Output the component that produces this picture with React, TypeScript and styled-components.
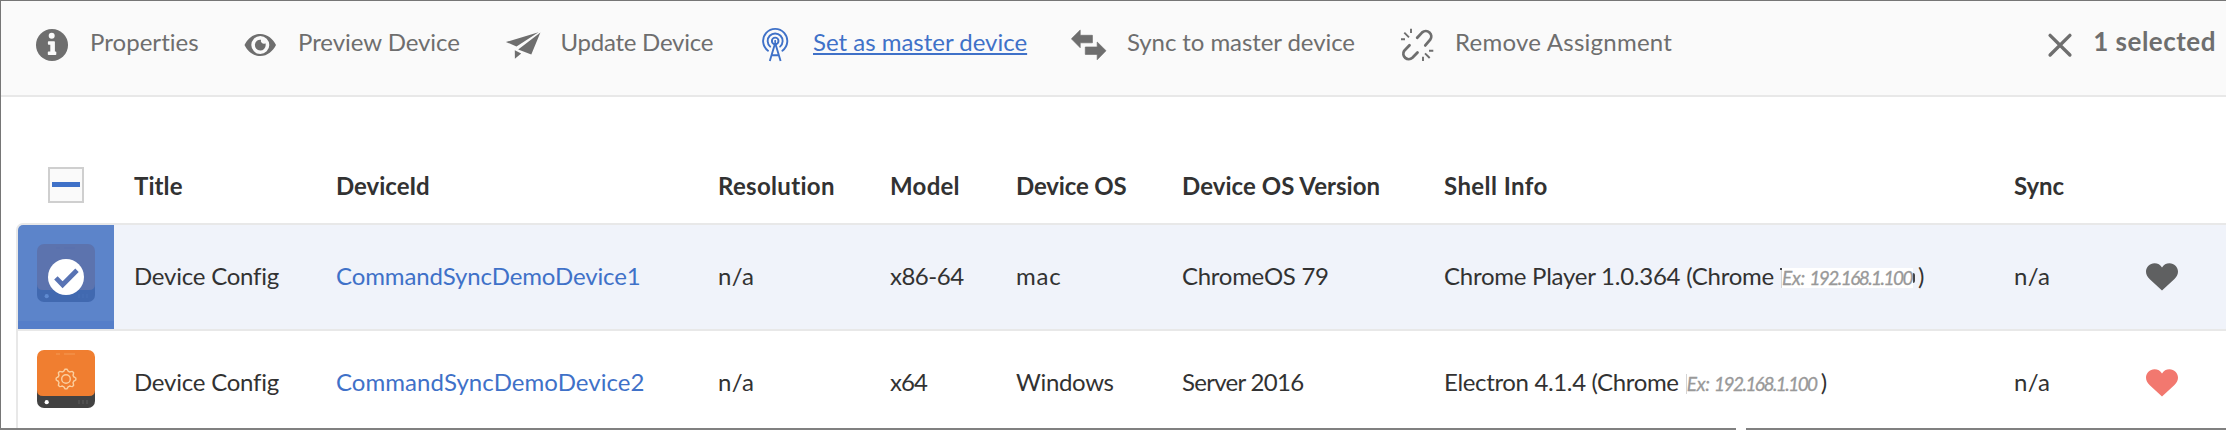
import React from "react";
import styled, { createGlobalStyle } from "styled-components";

const GlobalStyle = createGlobalStyle`
  * { box-sizing: border-box; }
  body { margin: 0; background: #fff; overflow: hidden; font-family: Lato, "Open Sans", sans-serif; font-size: 24px; }
`;

const Page = styled.div`
  width: 2226px;
  height: 433px;
  display: flex;
  flex-direction: column;
`;
const Frame = styled.main`
  height: 428px;
  border-top: 1px solid #767676;
  border-left: 1px solid #767676;
  overflow: hidden;
`;
const BottomEdge = styled.div`
  display: flex;
  gap: 10px;
  height: 2px;
`;
const Edge = styled.div<{ $width?: number }>`
  flex: ${(p) => (p.$width ? `0 0 ${p.$width}px` : "1")};
  background: #808080;
`;

const Toolbar = styled.nav`
  display: grid;
  grid-template-columns: 208px 262.5px 252.5px 314px 328px 400px 1fr;
  align-items: center;
  height: 96px;
  padding: 0 10px 6px 33px;
  background: #fafafa;
  border-bottom: 2px solid #e8e8e8;
`;
const Action = styled.a<{ $active?: boolean }>`
  display: flex;
  align-items: center;
  gap: 20px;
  height: 36px;
  color: ${(p) => (p.$active ? "#3f71c8" : "#6e6e6e")};
`;
const ActionLabel = styled.span<{ $tracking?: number; $active?: boolean }>`
  padding-bottom: 7px;
  line-height: 30px;
  white-space: nowrap;
  letter-spacing: ${(p) => p.$tracking ?? 0}px;
  text-decoration: ${(p) => (p.$active ? "underline" : "none")};
  text-decoration-thickness: 2px;
  text-underline-offset: 2px;
  text-decoration-skip-ink: none;
`;
const Selection = styled.div`
  display: flex;
  justify-content: flex-end;
  align-items: center;
  gap: 15px;
  color: #6e6e6e;
`;
const SelectionCount = styled.span`
  padding-bottom: 9px;
  font-size: 26px;
  font-weight: 700;
  line-height: 30px;
  letter-spacing: 0.5px;
  white-space: nowrap;
`;
const Icon = styled.svg`
  flex: none;
  width: 36px;
  height: 36px;
  fill: currentColor;
`;

const columns = "116px 202px 382px 172px 126px 166px 262px 570px 132px 1fr";

const HeaderRow = styled.div`
  display: grid;
  grid-template-columns: ${columns};
  align-items: center;
  height: 76px;
  margin: 50px 0 0 17px;
  color: #323232;
`;
const Checkbox = styled.div`
  display: flex;
  align-items: center;
  justify-content: center;
  width: 36px;
  height: 36px;
  margin-left: 30px;
  border: 2px solid #cfcfcf;
  background: #fafafa;
`;
const Dash = styled.div`
  width: 28px;
  height: 5px;
  margin-bottom: 1px;
  background: #3f71c8;
`;
const HeaderText = styled.span<{ $tracking?: number }>`
  padding-top: 2px;
  font-weight: 700;
  line-height: 30px;
  white-space: nowrap;
  letter-spacing: ${(p) => p.$tracking ?? 0}px;
`;
const TableBody = styled.div`
  margin-left: 15px;
  border: solid #e8e8e8;
  border-width: 2px 0 0 2px;
  border-top-left-radius: 7px;
  overflow: hidden;
`;
const Row = styled.div<{ $selected?: boolean }>`
  display: grid;
  grid-template-columns: ${columns};
  align-items: center;
  height: 106px;
  border-bottom: 2px solid #e8e8e8;
  background: ${(p) => (p.$selected ? "#f0f3fa" : "#fff")};
  color: #323232;
`;
const Thumb = styled.svg<{ $selected?: boolean }>`
  display: block;
  width: 96px;
  height: 104px;
  background: ${(p) => (p.$selected ? "linear-gradient(#5c84ca 96px, #557ec9 96px)" : "none")};
`;
const CellText = styled.span<{ $tracking?: number; $link?: boolean }>`
  padding-bottom: 2px;
  line-height: 30px;
  white-space: nowrap;
  letter-spacing: ${(p) => p.$tracking ?? 0}px;
  color: ${(p) => (p.$link ? "#3f71c8" : "inherit")};
`;
const ShellCell = styled.div`
  display: flex;
  align-items: center;
`;
const ExampleAddress = styled.em<{ $selected?: boolean }>`
  position: relative;
  width: 132px;
  height: 20px;
  margin: 1px ${(p) => (p.$selected ? 5 : 3)}px 0 7px;
  font-size: 19px;
  font-weight: 400;
  line-height: 19px;
  letter-spacing: -1.55px;
  white-space: nowrap;
  color: #999;
  background: #fff;
  border-left: 1px solid #d4d4d4;
  -webkit-text-stroke: 0.3px #999;

  &::before, &::after {
    content: "";
    display: ${(p) => (p.$selected ? "block" : "none")};
    position: absolute;
    background: #44464a;
  }
  &::before { left: -2px; top: 0; width: 2px; height: 2px; }
  &::after { right: -2px; top: 5px; width: 2px; height: 10px; border-radius: 0 2px 2px 0; }
`;
const AddressPrefix = styled.span`
  letter-spacing: -0.2px;
`;
const Heart = styled.svg<{ $healthy?: boolean }>`
  width: 32px;
  height: 28px;
  fill: ${(p) => (p.$healthy ? "#5f6061" : "#f2786f")};
`;

const InfoIcon = () => (
  <Icon viewBox="0 0 36 36">
    <circle cx="18" cy="18" r="16" />
    <g fill="#fafafa">
      <circle cx="17.7" cy="8.7" r="3" />
      <path d="M14.7 14.2h5.5q.7 0 .7.7v9.6h.6q.8 0 .8.8v1.900q0 .8-.8.8h-6.900q-.8 0-.8-.8v-1.900q0-.8.8-.8h1.700v-6.800h-1.600q-.8 0-.8-.8v-1.900q0-.8.8-.8z" />
    </g>
  </Icon>
);
const EyeIcon = () => (
  <Icon viewBox="0 0 36 36">
    <path fillRule="evenodd" d="M18.300 7C11 7 5.500 12 2.500 18c3 6 8.500 11 15.800 11S31 24 34 18C31 12 25.600 7 18.300 7zm0 2a9 9 0 1 1 0 18 9 9 0 0 1 0-18z" />
    <path d="M19 12.700a5.400 5.400 0 1 0 4.700 5.300c0-.7-.1-1.200-.3-1.700a3 3 0 0 1-4.400-3.600z" />
  </Icon>
);
const PlaneIcon = () => (
  <Icon viewBox="0 0 36 36">
    <path d="M.9 15 33.500 5.300 11.500 19.400zM35.400 5.500 26.300 27.500 13.200 22.500zM9.800 23.200 16.200 26.500 9.900 31.700z" />
  </Icon>
);
const AntennaIcon = () => (
  <Icon viewBox="0 0 36 36">
    <g fill="none" stroke="currentColor" strokeWidth="1.900" strokeLinecap="round">
      <path d="M11 23.700a12.100 12.100 0 1 1 14.400 0" />
      <path d="M13.200 19.600a7.500 7.500 0 1 1 9.900 0" />
      <circle cx="18.200" cy="13.900" r="3.300" />
      <path strokeLinecap="butt" d="M12.800 34 18.200 16l5.400 18M14.700 28.300h7" />
    </g>
    <circle cx="18.200" cy="13.900" r="1" />
  </Icon>
);
const SyncIcon = () => (
  <Icon viewBox="0 0 36 36">
    <path
      stroke="currentColor"
      strokeWidth=".7"
      strokeLinejoin="round"
      d="M.4 11.800 9.200 3.100V8.300H21.400V15.800H9.200V20.700zM14.300 20H26.200V15L35 23.700 26.200 32.700V27.400H14.300z"
    />
  </Icon>
);
const UnlinkIcon = () => (
  <Icon viewBox="0 0 36 36">
    <g fill="none" stroke="currentColor" strokeWidth="2.800">
      <path strokeLinecap="round" d="M18.200 10.800 23.200 5.400A5.450 5.450 0 0 1 31.200 12.700L26.300 18.400M18.500 25.500 13.400 30.800A5.450 5.450 0 0 1 5.200 23.800L10.500 18.200" />
      <path strokeWidth="1.900" d="M12 1.700V6M5.300 5.600 10 10.300M2 12.300h4M30 23.700h4.300M26 26.300l4.700 4.700M24 29.700v4.200" />
    </g>
  </Icon>
);
const CloseIcon = () => (
  <Icon viewBox="0 0 36 36">
    <path fill="none" stroke="currentColor" strokeWidth="3.400" strokeLinecap="round" d="M8.100 8.400 27.900 28M27.900 8.400 8.100 28" />
  </Icon>
);

const gearPath = Array.from({ length: 64 }, (_, i) => {
  const angle = (i / 64) * Math.PI * 2;
  const radius = 8.9 + 0.95 * Math.tanh(3 * Math.cos(8 * angle));
  return `${i ? "L" : "M"}${(48 + radius * Math.cos(angle)).toFixed(2)} ${(48 + radius * Math.sin(angle)).toFixed(2)}`;
}).join("") + "Z";

const DeviceThumb = ({ selected }: { selected?: boolean }) => (
  <Thumb $selected={selected} viewBox="0 0 96 104">
    <rect x="19" y="35" width="58" height="42" rx="7" fill={selected ? "#4169b0" : "#424242"} />
    <path d="M26 19h44a7 7 0 0 1 7 7v33q0 6-6 6H25q-6 0-6-6V26a7 7 0 0 1 7-7z" fill={selected ? "#5c73ae" : "#f07e30"} />
    <path d="M38 23h4M46 23h11" stroke={selected ? "#5970ae" : "#f59a54"} strokeWidth="1" />
    <circle cx="28.700" cy="71.200" r="2.100" fill={selected ? "#5f8ad0" : "#fff"} />
    <path d="M61 69v4M65 69v4M69 69v4" stroke={selected ? "#4870b6" : "#5c5c5c"} strokeWidth="1" />
    {selected ? (
      <>
        <circle cx="48" cy="52" r="18" fill="#fff" />
        <path d="M37.900 52.800 44.600 59.700 59 45.200" fill="none" stroke="#5873b4" strokeWidth="4.800" />
      </>
    ) : (
      <g fill="none" stroke="#fbcf9f" strokeWidth="1.400">
        <path d={gearPath} />
        <circle cx="48" cy="48" r="4.300" />
      </g>
    )}
  </Thumb>
);
const HeartIcon = ({ healthy }: { healthy?: boolean }) => (
  <Heart $healthy={healthy} viewBox="0 0 32 28">
    <path d="M16 27.600 3.800 16.200C1.500 14 0 11.800 0 8.800 0 4 3.800.3 8.500.3c3.200 0 6 1.600 7.500 4.100C17.500 1.900 20.300.3 23.500.3 28.200.3 32 4 32 8.800c0 3-1.500 5.200-3.800 7.400z" />
  </Heart>
);

export default function App() {
  return (
    <>
      <GlobalStyle />
      <Page>
        <Frame>
          <Toolbar>
            <Action><InfoIcon /><ActionLabel $tracking={0.04}>Properties</ActionLabel></Action>
            <Action><EyeIcon /><ActionLabel $tracking={-0.05}>Preview Device</ActionLabel></Action>
            <Action><PlaneIcon /><ActionLabel $tracking={-0.25}>Update Device</ActionLabel></Action>
            <Action $active><AntennaIcon /><ActionLabel $active $tracking={-0.01}>Set as master device</ActionLabel></Action>
            <Action><SyncIcon /><ActionLabel $tracking={-0.08}>Sync to master device</ActionLabel></Action>
            <Action><UnlinkIcon /><ActionLabel $tracking={0.25}>Remove Assignment</ActionLabel></Action>
            <Selection><CloseIcon /><SelectionCount>1 selected</SelectionCount></Selection>
          </Toolbar>
          <HeaderRow>
            <Checkbox><Dash /></Checkbox>
            <HeaderText $tracking={0.1}>Title</HeaderText>
            <HeaderText>DeviceId</HeaderText>
            <HeaderText $tracking={0.31}>Resolution</HeaderText>
            <HeaderText $tracking={0.27}>Model</HeaderText>
            <HeaderText $tracking={-0.15}>Device OS</HeaderText>
            <HeaderText $tracking={0.05}>Device OS Version</HeaderText>
            <HeaderText $tracking={0.42}>Shell Info</HeaderText>
            <HeaderText $tracking={-0.1}>Sync</HeaderText>
          </HeaderRow>
          <TableBody>
            <Row $selected>
              <DeviceThumb selected />
              <CellText $tracking={-0.22}>Device Config</CellText>
              <CellText $link $tracking={-0.12}>CommandSyncDemoDevice1</CellText>
              <CellText $tracking={0.3}>n/a</CellText>
              <CellText $tracking={-0.5}>x86-64</CellText>
              <CellText $tracking={0.8}>mac</CellText>
              <CellText $tracking={-0.28}>ChromeOS 79</CellText>
              <ShellCell>
                <CellText $tracking={-0.25}>Chrome Player 1.0.364 (Chrome</CellText>
                <ExampleAddress $selected><AddressPrefix>Ex: </AddressPrefix>192.168.1.100</ExampleAddress>
                <CellText>)</CellText>
              </ShellCell>
              <CellText $tracking={0.3}>n/a</CellText>
              <HeartIcon healthy />
            </Row>
            <Row>
              <DeviceThumb />
              <CellText $tracking={-0.22}>Device Config</CellText>
              <CellText $link $tracking={0.06}>CommandSyncDemoDevice2</CellText>
              <CellText $tracking={0.3}>n/a</CellText>
              <CellText $tracking={-0.9}>x64</CellText>
              <CellText $tracking={-0.32}>Windows</CellText>
              <CellText $tracking={-0.7}>Server 2016</CellText>
              <ShellCell>
                <CellText $tracking={-0.35}>Electron 4.1.4 (Chrome</CellText>
                <ExampleAddress><AddressPrefix>Ex: </AddressPrefix>192.168.1.100</ExampleAddress>
                <CellText>)</CellText>
              </ShellCell>
              <CellText $tracking={0.3}>n/a</CellText>
              <HeartIcon />
            </Row>
          </TableBody>
        </Frame>
        <BottomEdge><Edge $width={1736} /><Edge /></BottomEdge>
      </Page>
    </>
  );
}
